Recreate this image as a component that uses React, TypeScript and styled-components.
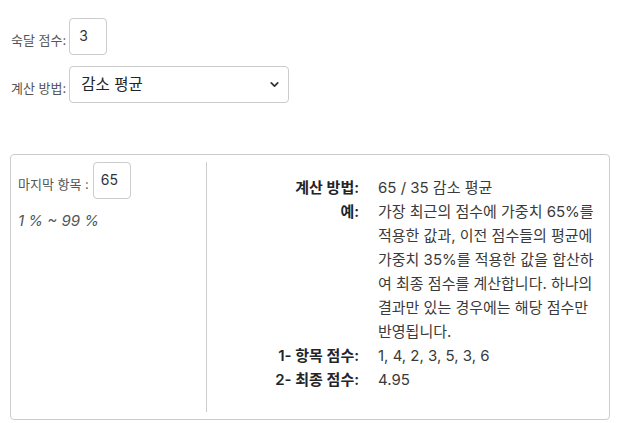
import styled, { createGlobalStyle } from "styled-components";
import { ChevronDown } from "lucide-react";

const GlobalStyle = createGlobalStyle`
  body {
    margin: 0;
    background: #fff;
    font-family: "Inter", "Noto Sans CJK KR", sans-serif;
    color: #212529;
  }
`;

const rows = [
  { label: "계산 방법:", value: "65 / 35 감소 평균" },
  {
    label: "예:",
    value:
      "가장 최근의 점수에 가중치 65%를 적용한 값과, 이전 점수들의 평균에 가중치 35%를 적용한 값을 합산하여 최종 점수를 계산합니다. 하나의 결과만 있는 경우에는 해당 점수만 반영됩니다.",
  },
  { label: "1- 항목 점수:", value: "1, 4, 2, 3, 5, 3, 6" },
  { label: "2- 최종 점수:", value: "4.95" },
];

const App = () => {
  return (
    <Page>
      <GlobalStyle />
      <FormRow>
        <SmallLabel>숙달 점수:</SmallLabel>
        <NumberInput defaultValue="3" $pad={9} />
      </FormRow>
      <FormRow $top={11}>
        <SmallLabel>계산 방법:</SmallLabel>
        <SelectWrapp>
          <Select defaultValue="decay">
            <option value="decay">감소 평균</option>
          </Select>
          <Chevron size={13} strokeWidth={3.2} />
        </SelectWrapp>
      </FormRow>

      <Card>
        <LeftCol>
          <FormRow $gap={4}>
            <SmallLabel>마지막 항목 :</SmallLabel>
            <NumberInput defaultValue="65" $pad={7} />
          </FormRow>
          <Range>1 % ~ 99 %</Range>
        </LeftCol>
        <RightCol>
          <InfoGrid>
            {rows.map((row, i) => (
              <InfoRow key={i}>
                <InfoLabel>{row.label}</InfoLabel>
                <InfoValue>{row.value}</InfoValue>
              </InfoRow>
            ))}
          </InfoGrid>
        </RightCol>
      </Card>
    </Page>
  );
};

const Page = styled.div`
  padding: 18px 8px 0 10px;
`;

const FormRow = styled.div<{ $top?: number; $gap?: number }>`
  display: flex;
  align-items: flex-end;
  gap: ${(p) => p.$gap ?? 3}px;
  margin-top: ${(p) => p.$top ?? 0}px;
`;

const SmallLabel = styled.label`
  font-size: 13px;
  line-height: 15px;
  color: #555;
  padding-bottom: 7px;
  margin-left: 1px;
`;

const NumberInput = styled.input<{ $pad: number }>`
  box-sizing: border-box;
  width: 38px;
  height: 37px;
  padding: 0 0 2px ${(p) => p.$pad}px;
  border: 1px solid #ccc;
  border-radius: 4px;
  font-family: "Inter", sans-serif;
  font-size: 14px;
  color: #333;
  outline: none;
`;

const SelectWrapp = styled.div`
  position: relative;
  width: 220px;
  height: 37px;
`;

const Select = styled.select`
  appearance: none;
  box-sizing: border-box;
  width: 100%;
  height: 100%;
  padding: 0 30px 0 11px;
  border: 1px solid #ccc;
  border-radius: 4px;
  background: #fff;
  font-family: "Inter", "Noto Sans CJK KR", sans-serif;
  font-size: 15.5px;
  color: #212529;
  outline: none;
`;

const Chevron = styled(ChevronDown)`
  position: absolute;
  right: 8px;
  top: 12px;
  color: #333;
  pointer-events: none;
`;

const Card = styled.div`
  box-sizing: border-box;
  display: flex;
  width: 600px;
  height: 266px;
  margin-top: 51px;
  padding: 7px 0;
  border: 1px solid #ccc;
  border-radius: 4px;
`;

const LeftCol = styled.div`
  width: 189px;
  padding-left: 6px;
  border-right: 1px solid #ccc;
`;

const Range = styled.p`
  margin: 12px 0 0 1px;
  font-size: 15px;
  font-style: italic;
  color: #555;
`;

const RightCol = styled.div`
  flex: 1;
  padding-top: 14px;
`;

const InfoGrid = styled.div`
  display: flex;
  flex-direction: column;
`;

const InfoRow = styled.div`
  display: grid;
  grid-template-columns: 152px 217px;
  column-gap: 19px;
  font-size: 15px;
  line-height: 24px;
`;

const InfoLabel = styled.span`
  text-align: right;
  font-weight: 600;
  color: #212529;
`;

const InfoValue = styled.span`
  color: #3a3a3a;
`;

export default App;
